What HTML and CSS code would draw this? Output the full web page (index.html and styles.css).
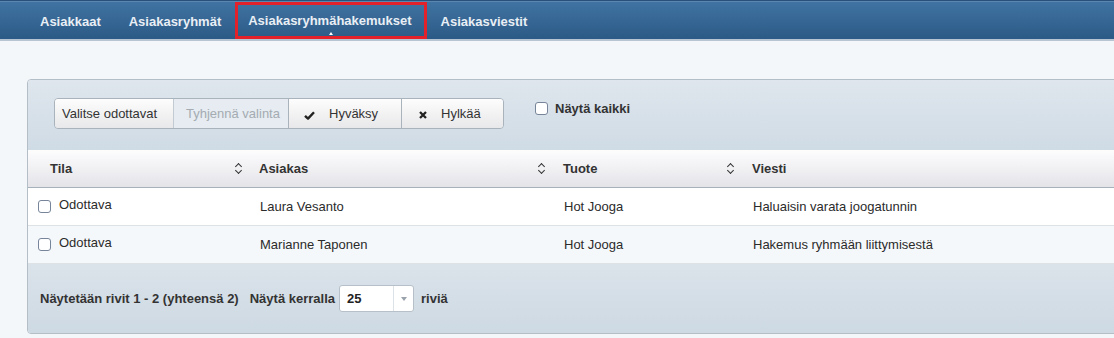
FILE: index.html
```html
<!DOCTYPE html>
<html lang="fi">
<head>
  <meta charset="UTF-8">
  <meta name="viewport" content="width=device-width, initial-scale=1.0">
  <title>Asiakasryhmähakemukset</title>
  <link rel="stylesheet" href="styles.css">
</head>
<body>

  <nav class="topnav">
    <a href="#">Asiakkaat</a>
    <a href="#">Asiakasryhmät</a>
    <a href="#" class="active">Asiakasryhmähakemukset</a>
    <a href="#">Asiakasviestit</a>
  </nav>

  <main class="content">
    <div class="panel">

      <div class="toolbar">
        <div class="btn-group">
          <button class="btn btn-select">Valitse odottavat</button>
          <button class="btn btn-clear" disabled>Tyhjennä valinta</button>
          <button class="btn btn-accept">
            <svg class="icon" width="11" height="9" viewBox="0 0 11 9"><path d="M1 4.8 L4 7.6 L10 1.2" fill="none" stroke="#222" stroke-width="2.4" stroke-linejoin="round"/></svg>
            Hyväksy
          </button>
          <button class="btn btn-reject">
            <svg class="icon" width="8" height="8" viewBox="0 0 8 8"><path d="M1 1 L7 7 M7 1 L1 7" stroke="#222" stroke-width="2.3"/></svg>
            Hylkää
          </button>
        </div>
        <label class="show-all"><input type="checkbox" class="check"> Näytä kaikki</label>
      </div>

      <div class="grid head">
        <div class="cell first">Tila <span class="sort"></span></div>
        <div class="cell">Asiakas <span class="sort"></span></div>
        <div class="cell">Tuote <span class="sort"></span></div>
        <div class="cell">Viesti <span class="sort"></span></div>
      </div>

      <div class="grid row">
        <div class="cell first"><input type="checkbox" class="check"> Odottava</div>
        <div class="cell">Laura Vesanto</div>
        <div class="cell">Hot Jooga</div>
        <div class="cell">Haluaisin varata joogatunnin</div>
      </div>
      <div class="grid row alt">
        <div class="cell first"><input type="checkbox" class="check"> Odottava</div>
        <div class="cell">Marianne Taponen</div>
        <div class="cell">Hot Jooga</div>
        <div class="cell">Hakemus ryhmään liittymisestä</div>
      </div>

      <div class="pager">
        <span>Näytetään rivit 1 - 2 (yhteensä 2)</span>
        <span class="per-page">Näytä kerralla</span>
        <div class="select">
          <span class="value">25</span>
          <span class="arrow"></span>
        </div>
        <span>riviä</span>
      </div>

    </div>
  </main>

</body>
</html>
```

FILE: styles.css
```css
/* Basic Reset */
* {
  margin: 0;
  padding: 0;
  box-sizing: border-box;
}

body {
  font-family: 'Liberation Sans', Arial, sans-serif;
  font-size: 13px;
  color: #333;
  background: #f4f7fa;
  overflow: hidden;
}

/* Top navigation */
.topnav {
  display: flex;
  height: 41px;
  padding-left: 26px;
  background: linear-gradient(#4174a3, #2c5a86);
  border-top: 1px solid #27507a;
  border-bottom: 2px solid #b7c5d2;
  box-shadow: inset 0 1px 0 #5a86b0;
}

.topnav a {
  position: relative;
  display: flex;
  align-items: center;
  padding: 0 11px 0 11px;
  margin: 1px 0 0;
  border: 3px solid transparent;
  border-bottom-width: 1px;
  color: #e9eff5;
  font-weight: bold;
  text-decoration: none;
}

.topnav a.active {
  border-color: #e3212b;
  border-bottom-width: 3px;
  padding-left: 10px;
  padding-right: 12px;
}

.topnav a.active::after {
  content: '';
  position: absolute;
  left: 50%;
  bottom: 1px;
  margin-left: -2px;
  border: 2px solid transparent;
  border-bottom: 3px solid #fff;
}

/* Content */
.content {
  padding: 38px 0 0 27px;
}

.panel {
  margin-right: -20px;
  border: 1px solid #b4bec7;
  border-radius: 4px;
  overflow: hidden;
}

.toolbar {
  display: flex;
  align-items: flex-start;
  height: 70px;
  padding: 18px 0 0 26px;
  background: linear-gradient(#dfe6ed, #cfdbe5);
}

.btn-group {
  display: flex;
  height: 31px;
  border: 1px solid #a9b3bc;
  border-radius: 4px;
  overflow: hidden;
}

.btn {
  display: flex;
  align-items: center;
  font-family: inherit;
  font-size: 13px;
  color: #333;
  border: none;
  border-left: 1px solid #a9b3bc;
  background: linear-gradient(#fdfdfd, #e8e8ea);
  cursor: pointer;
}

.btn:first-child {
  border-left: none;
}

.btn-select { width: 118px; padding-left: 7px; }
.btn-clear  { width: 115px; padding-left: 12px; }
.btn-accept { width: 113px; padding-left: 15px; }
.btn-reject { width: 102px; padding-left: 17px; }

.btn-clear:disabled {
  background: #e6ecf1;
  color: #a4abb2;
  border-left-color: #c3cbd2;
  cursor: default;
}

.btn-clear + .btn {
  border-left-color: #a9b3bc;
}

.btn-accept .icon,
.btn-reject .icon {
  margin: 3px 14px 0 0;
}

.show-all {
  display: flex;
  align-items: center;
  gap: 7px;
  margin: 3px 0 0 31px;
  font-weight: bold;
  color: #333;
}

/* Checkboxes */
.check {
  appearance: none;
  width: 13px;
  height: 13px;
  border: 1px solid #76859a;
  border-radius: 3px;
  background: #fff;
  flex-shrink: 0;
}

/* Table */
.grid {
  display: grid;
  grid-template-columns: 222px 304px 189px 1fr;
}

.head {
  height: 38px;
  background: linear-gradient(#fdfdfe, #e4e3e8);
  border-bottom: 1px solid #a6b1bb;
  font-weight: bold;
}

.head .cell {
  display: flex;
  align-items: center;
  justify-content: space-between;
  padding: 0 9px;
}

.head .cell.first {
  padding-left: 22px;
  padding-right: 8px;
}

.sort {
  position: relative;
  width: 7px;
  height: 11px;
}

.sort::before,
.sort::after {
  content: '';
  position: absolute;
  left: 1px;
  width: 4px;
  height: 4px;
  border-left: 1.5px solid #333;
  border-top: 1.5px solid #333;
}

.sort::before {
  top: 1px;
  transform: rotate(45deg);
}

.sort::after {
  bottom: 1px;
  transform: rotate(-135deg);
}

.row {
  height: 38px;
  background: #fff;
  border-bottom: 1px solid #dde2e6;
}

.row.alt {
  background: #f5f8fa;
}

.row .cell {
  display: flex;
  align-items: center;
  padding: 0 10px;
  color: #2b2b2b;
}

.row .cell.first {
  align-items: flex-start;
  gap: 8px;
  padding-top: 9px;
}

.row .cell.first .check {
  margin-top: 3px;
}

/* Pager */
.pager {
  display: flex;
  align-items: center;
  height: 69px;
  padding-left: 12px;
  background: linear-gradient(#dbe3ea, #cdd9e3);
  font-weight: bold;
  color: #333;
}

.per-page {
  margin: 0 4px 0 11px;
}

.select {
  display: flex;
  width: 75px;
  height: 27px;
  margin-right: 7px;
  background: #fff;
  border: 1px solid #b7c0c8;
  border-radius: 3px;
}

.select .value {
  flex: 1;
  display: flex;
  align-items: center;
  padding-left: 7px;
  color: #222;
}

.select .arrow {
  position: relative;
  width: 20px;
  border-left: 1px solid #dde2e6;
}

.select .arrow::after {
  content: '';
  position: absolute;
  left: 7px;
  top: 11px;
  border: 3px solid transparent;
  border-top: 4px solid #9aa3ab;
}
```
